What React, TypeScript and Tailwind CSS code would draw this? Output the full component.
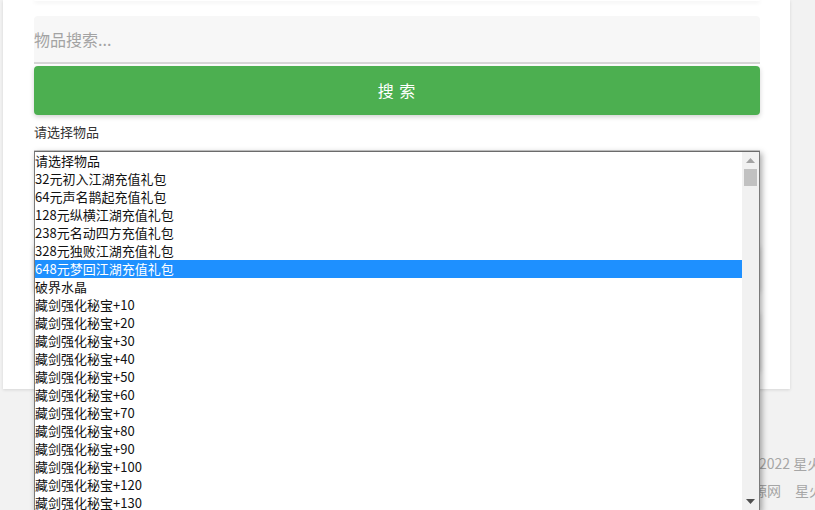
import React from "react";

const items = [
  "请选择物品",
  "32元初入江湖充值礼包",
  "64元声名鹊起充值礼包",
  "128元纵横江湖充值礼包",
  "238元名动四方充值礼包",
  "328元独败江湖充值礼包",
  "648元梦回江湖充值礼包",
  "破界水晶",
  "藏剑强化秘宝+10",
  "藏剑强化秘宝+20",
  "藏剑强化秘宝+30",
  "藏剑强化秘宝+40",
  "藏剑强化秘宝+50",
  "藏剑强化秘宝+60",
  "藏剑强化秘宝+70",
  "藏剑强化秘宝+80",
  "藏剑强化秘宝+90",
  "藏剑强化秘宝+100",
  "藏剑强化秘宝+120",
  "藏剑强化秘宝+130",
  "藏剑强化秘宝+140",
];

const font = { fontFamily: '"Noto Sans CJK SC", "Noto Sans", sans-serif' };

export default function App() {
  return (
    <div
      className="relative h-[510px] w-[815px] overflow-hidden bg-[#f2f2f2]"
      style={font}
    >
      {/* main card */}
      <div className="ml-[3px] w-[787px] h-[389px] bg-white shadow-[0_1px_3px_rgba(0,0,0,0.12)] px-[31px]">
        <div className="h-[1px] w-[726px] rounded-b bg-white shadow-[0_1px_4px_rgba(0,0,0,0.16)]" />
        <div className="mt-[15px] h-[48px] w-[726px] rounded-t bg-[#f7f7f7] border-b-[2px] border-[#d6d6d6] flex items-center pb-[1px] text-[16px] text-[#a3a3a3]">
          物品搜索...
        </div>
        <div className="mt-[2px] h-[49px] w-[726px] rounded-[4px] bg-[#4caf50] shadow-[0_2px_5px_rgba(0,0,0,0.18)] flex items-center justify-center pb-[2px] text-white text-[16px] tracking-[1px]">
          搜 索
        </div>
        <div className="mt-[8px] text-[13px] leading-[18px] text-[#333]">请选择物品</div>
        <div className="mt-[9px] h-[30px] w-[726px] border border-[#ccc] bg-white" />
        <div className="mt-[64px] h-[47px] w-[726px] rounded-[4px] bg-[#4caf50] shadow-[0_2px_5px_rgba(0,0,0,0.18)]" />
        <div className="mt-[20px] h-[60px] w-[726px] rounded-[4px] bg-white shadow-[0_2px_5px_rgba(0,0,0,0.18)]" />
      </div>

      {/* footer */}
      <div className="mt-[66px] whitespace-nowrap text-[14px] leading-[16px] text-[#a6a6a6]">
        <div className="flex">
          <span className="w-[759px] shrink-0 text-right">Copyright © 2017-</span>
          <span>2022 星火资源网 版权所有</span>
        </div>
        <div className="mt-[11px] flex">
          <span className="w-[781px] shrink-0 text-right">友情链接：星火资源网</span>
          <span className="ml-[14px]">星火游戏</span>
        </div>
      </div>

      {/* open select popup */}
      <div className="absolute left-[34px] top-[151px] flex h-[360px] w-[726px] border border-[#7a7a7a] border-t-[#6b6b6b] bg-white shadow-[2px_2px_6px_rgba(0,0,0,0.35)]">
        <div className="flex-1 overflow-hidden">
          {items.map((t, i) => (
            <div
              key={i}
              className={
                i === 6
                  ? "h-[18px] bg-[#1e90ff] text-white text-[13px] leading-[18px] whitespace-nowrap"
                  : "h-[18px] text-[#111] text-[13px] leading-[18px] whitespace-nowrap"
              }
            >
              {t}
            </div>
          ))}
        </div>
        <div className="flex w-[17px] flex-col bg-[#f1f1f1]">
          <div className="flex h-[17px] items-center justify-center">
            <svg width="9" height="5" viewBox="0 0 9 5">
              <polygon points="0,5 9,5 4.5,0" fill="#a3a3a3" />
            </svg>
          </div>
          <div className="mx-[2px] h-[17px] bg-[#c1c1c1]" />
          <div className="flex-1" />
          <div className="flex h-[17px] items-center justify-center">
            <svg width="9" height="5" viewBox="0 0 9 5">
              <polygon points="0,0 9,0 4.5,5" fill="#505050" />
            </svg>
          </div>
        </div>
      </div>
    </div>
  );
}
